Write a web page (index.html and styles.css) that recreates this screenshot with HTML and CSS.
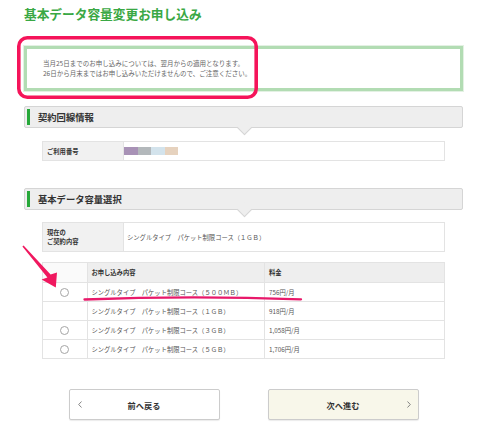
FILE: index.html
```html
<!DOCTYPE html>
<html lang="ja">
<head>
<meta charset="utf-8">
<title>基本データ容量変更お申し込み</title>
<link rel="stylesheet" href="styles.css">
</head>
<body>
<div class="page">
  <h1 class="title">基本データ容量変更お申し込み</h1>

  <div class="notice">
    <p>当月25日までのお申し込みについては、翌月からの適用となります。</p>
    <p>26日から月末まではお申し込みいただけませんので、ご注意ください。</p>
  </div>

  <section class="sec">
    <h2 class="sec-head">契約回線情報</h2>
    <table class="info">
      <tr>
        <th class="label">ご利用番号</th>
        <td class="value">
          <div class="masked">
            <span class="blk b1"></span><span class="blk b2"></span><span class="blk b3"></span><span class="blk b4"></span>
          </div>
        </td>
      </tr>
    </table>
  </section>

  <section class="sec sec2">
    <h2 class="sec-head">基本データ容量選択</h2>
    <table class="info current">
      <tr>
        <th class="label">現在の<br>ご契約内容</th>
        <td class="value text">シングルタイプ　パケット制限コース（１ＧＢ）</td>
      </tr>
    </table>

    <table class="options">
      <colgroup>
        <col class="c-radio"><col class="c-name"><col class="c-price">
      </colgroup>
      <tr class="head">
        <th class="blank"></th>
        <th>お申し込み内容</th>
        <th>料金</th>
      </tr>
      <tr>
        <td class="radio"><span class="circle"></span></td>
        <td>シングルタイプ　パケット制限コース（５００ＭＢ）</td>
        <td>756円/月</td>
      </tr>
      <tr>
        <td class="radio"></td>
        <td>シングルタイプ　パケット制限コース（１ＧＢ）</td>
        <td>918円/月</td>
      </tr>
      <tr>
        <td class="radio"><span class="circle"></span></td>
        <td>シングルタイプ　パケット制限コース（３ＧＢ）</td>
        <td>1,058円/月</td>
      </tr>
      <tr>
        <td class="radio"><span class="circle"></span></td>
        <td>シングルタイプ　パケット制限コース（５ＧＢ）</td>
        <td>1,706円/月</td>
      </tr>
    </table>
  </section>

  <div class="buttons">
    <a class="btn prev" href="#">
      <svg class="chev" width="4" height="7" viewBox="0 0 4 7"><polyline points="3.5,0.5 0.7,3.5 3.5,6.5" fill="none" stroke="#777" stroke-width="0.9"/></svg>
      <span class="btn-text">前へ戻る</span>
      <span></span>
    </a>
    <a class="btn next" href="#">
      <span></span>
      <span class="btn-text">次へ進む</span>
      <svg class="chev" width="4" height="7" viewBox="0 0 4 7"><polyline points="0.5,0.5 3.3,3.5 0.5,6.5" fill="none" stroke="#777" stroke-width="0.9"/></svg>
    </a>
  </div>
</div>

<svg class="annot" width="500" height="431" viewBox="0 0 500 431">
  <rect x="18.8" y="37.8" width="237.4" height="59.4" rx="8.5" ry="8.5" fill="none" stroke="#f5145a" stroke-width="3.6"/>
  <path d="M84.5,299.5 Q190,295.3 301,299.3" fill="none" stroke="#e8196a" stroke-width="2.3" stroke-linecap="round"/>
  <polygon points="22.4,246.4 23.6,245.6 50.6,274.6 57,272.4 55.8,287.4 41.6,279.6 47.4,277.4" fill="#f0185f"/>
</svg>
</body>
</html>
```

FILE: styles.css
```css
* { box-sizing: border-box; }

html, body {
  margin: 0;
  padding: 0;
  background: #fff;
}

body {
  font-family: "Noto Sans CJK JP", "Noto Sans", "Liberation Sans", sans-serif;
  color: #444;
  position: relative;
  width: 500px;
  height: 431px;
  overflow: hidden;
}

.page {
  width: 439px;
  margin-left: 24px;
  padding-top: 6px;
}

.title {
  margin: 0;
  font-size: 12.7px;
  line-height: 16px;
  font-weight: bold;
  color: #3aa844;
}

.notice {
  margin-top: 24px;
  border: 3px solid #b2dcb3;
  box-shadow: 0 0 0 1px #e3f1e3;
  padding: 9px 16px 10px;
  height: 45px;
}

.notice p {
  margin: 0;
  font-size: 6.5px;
  line-height: 10px;
  color: #666;
}

.sec { margin-top: 15px; }
.sec2 { margin-top: 27px; }

.sec-head {
  position: relative;
  margin: 0;
  height: 22px;
  display: flex;
  align-items: center;
  padding-left: 2px;
  background: #eeeeee;
  border: 1px solid #d5d5d5;
  border-radius: 2px;
  font-size: 9.3px;
  font-weight: bold;
  color: #333;
}

.sec-head::before {
  content: "";
  width: 3px;
  height: 16px;
  background: #27a83a;
  margin-right: 8px;
}

.sec-head::after {
  content: "";
  position: absolute;
  left: calc(50% - 5px);
  bottom: -6px;
  width: 10px;
  height: 10px;
  background: #eeeeee;
  border-right: 1px solid #d5d5d5;
  border-bottom: 1px solid #d5d5d5;
  transform: rotate(45deg);
}

table {
  border-collapse: collapse;
}

.info {
  margin: 13px 18px 0;
  width: 403px;
  height: 20px;
  border: 1px solid #e3e3e3;
}

.info .label {
  width: 81px;
  background: #f1f1f1;
  border-right: 1px solid #e3e3e3;
  text-align: left;
  padding: 0 0 0 4px;
  font-size: 6.3px;
  line-height: 9px;
  font-weight: bold;
  color: #333;
}

.info .value {
  padding: 0;
  background: #fff;
}

.masked {
  display: flex;
}

.blk {
  width: 13.5px;
  height: 8px;
}
.b1 { background: #a892b6; }
.b2 { background: #b3b8bb; }
.b3 { background: #d3e3ec; }
.b4 { background: #e6d2be; }

.current {
  margin-top: 12px;
  height: 30px;
}

.info .value.text {
  padding-left: 3px;
  font-size: 6.3px;
  color: #555;
}

.options {
  margin: 10px 18px 0;
  width: 403px;
  border: 1px solid #e3e3e3;
}

.c-radio { width: 45px; }
.c-name { width: 178px; }
.c-price { width: 180px; }

.options th,
.options td {
  border: 1px solid #e3e3e3;
  text-align: left;
  font-size: 6.3px;
  padding: 0 0 0 3.5px;
  height: 19px;
}

.options .head th {
  height: 20px;
  background: #eeeeee;
  font-weight: bold;
  color: #333;
}

.options .head th.blank {
  background: #fafafa;
}

.options td {
  color: #555;
}

.options td.radio {
  padding: 0;
  text-align: center;
}

.circle {
  display: inline-block;
  vertical-align: middle;
  width: 9px;
  height: 9px;
  border: 1px solid #a5a5a5;
  border-radius: 50%;
  background: #fff;
}

.buttons {
  margin-top: 30px;
  display: flex;
  justify-content: center;
  gap: 48px;
}

.btn {
  width: 151px;
  height: 31px;
  display: grid;
  grid-template-columns: 20px 1fr 20px;
  align-items: center;
  border: 1px solid #cccccc;
  border-radius: 2px;
  box-shadow: 0 1px 1px rgba(0, 0, 0, 0.08);
  text-decoration: none;
  background: #fff;
}

.btn.next {
  background: #f8f7ea;
}

.btn-text {
  text-align: center;
  font-size: 8.2px;
  font-weight: bold;
  color: #333;
}

.prev .chev {
  justify-self: start;
  margin-left: 8px;
}

.next .chev {
  justify-self: end;
  margin-right: 7px;
}

.annot {
  position: absolute;
  left: 0;
  top: 0;
  pointer-events: none;
}
```
